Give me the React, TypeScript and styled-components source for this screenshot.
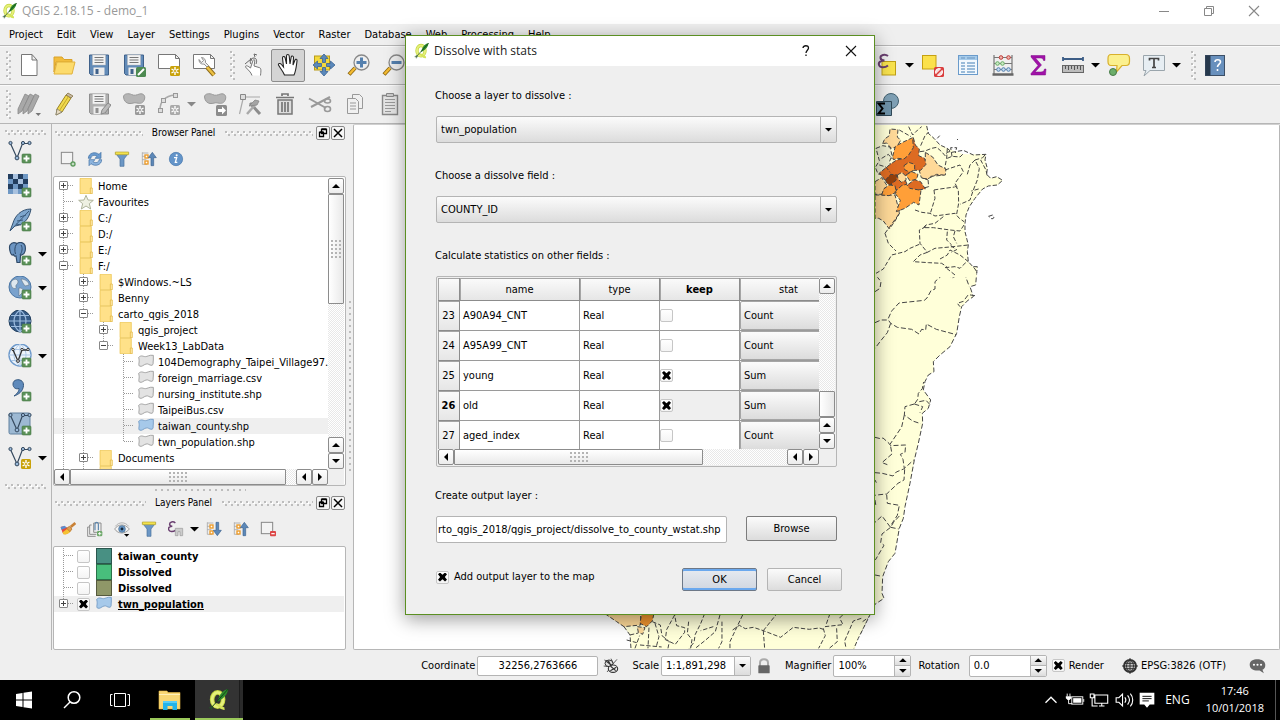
import React from "react";
import styled, { createGlobalStyle, css } from "styled-components";

const Global = createGlobalStyle`
  *, *::before, *::after { box-sizing: border-box; }
  body { margin: 0; background: #efefef; }
  body, button, input, select, table {
    font-family: "DejaVu Sans Condensed", "DejaVu Sans", sans-serif;
    font-size: 11px;
    line-height: 16px;
    color: #000;
  }
  button { padding: 0; border: 0; background: none; }
  svg { display: block; flex: none; }
`;

const system = `"Open Sans", "Noto Sans", sans-serif`;
const raised = `linear-gradient(#fbfbfb, #dcdcdc)`;

/* ---------- icons ---------- */

const Plus = () => (
  <>
    <rect x="14" y="14" width="9" height="9" rx="1" fill="#5b9158" stroke="#487a48" strokeWidth=".6" />
    <path d="M18.5 15.5v6M15.5 18.5h6" stroke="#fff" strokeWidth="1.8" />
  </>
);
const Gear = ({ tone = "#c9a20a" }: { tone?: string }) => (
  <>
    <rect x="13" y="13" width="10" height="10" rx="1.5" fill={tone} />
    <path d="M18 14v8M14.5 16l7 4M14.5 20l7-4" stroke="#fff" strokeWidth="1.4" />
    <circle cx="18" cy="18" r="1.1" fill={tone} />
  </>
);
const Disk = ({ tone = "#628bb8", line = "#3f618a" }: { tone?: string; line?: string }) => (
  <>
    <path d="M2.5 2h19v20H4l-1.500-1.500z" fill={tone} stroke={line} />
    <rect x="5.500" y="2" width="13" height="10" fill="#f3f3f3" stroke="#bbb" strokeWidth=".5" />
    <path d="M7.500 4.500h9M7.500 7h9M7.500 9.500h9" stroke="#777" />
    <rect x="6.500" y="14.500" width="11" height="7.500" fill="#ececec" />
    <rect x="8.500" y="16" width="3" height="5" fill={line} />
  </>
);
const Vee = () => (
  <>
    <path d="M2.500 3.500 9 18 14.500 3.500h7" fill="none" stroke="#35495e" strokeWidth="1.200" />
    <g fill="#9bbbdc" stroke="#35495e">
      <circle cx="2.500" cy="3" r="1.600" /><circle cx="9" cy="18" r="1.900" />
      <circle cx="15" cy="3" r="1.600" /><circle cx="21.500" cy="3" r="1.600" />
    </g>
  </>
);
const Mag = ({ minus }: { minus?: boolean }) => (
  <>
    <path d="m8 15-6 6.500" stroke="#8a6510" strokeWidth="4" />
    <path d="m8 15-5.500 6" stroke="#f4bb32" strokeWidth="2.400" />
    <circle cx="14.500" cy="9.500" r="7.500" fill="#efefef" stroke="#888" strokeWidth="1.300" />
    <path d={minus ? "M9.500 9.500h10" : "M9.500 9.500h10M14.500 4.500v10"} stroke="#5580ae" strokeWidth="3" />
  </>
);
const Blob = ({ tone = "#b5b5b5", line = "#999" }: { tone?: string; line?: string }) => (
  <path d="M1.500 5c0-3.500 5-4 8-2.500s5 .5 8-.5c4-1 6 2 5 5-1 4-4 5-7.500 4-3-1-5 1-8 .500S2 9 1.500 5z" fill={tone} stroke={line} />
);
const Needle = ({ flip }: { flip?: boolean }) => (
  <>
    <path d="M2 2v18M2 3h9M2 8h6M2 13h6M2 20h7" stroke="#999" fill="none" />
    <rect x="6" y="6" width="4.500" height="4.500" fill="#fff" stroke="#ee9a25" strokeWidth="2" />
    <rect x="6" y="15" width="4.500" height="4.500" fill="#fff" stroke="#ee9a25" strokeWidth="2" />
    <path d={flip ? "M15 2h4v12h4l-6 8-6-8h4z" : "M15 22h4V10h4l-6-8-6 8h4z"} fill="#5c88b8" stroke="#3e648f" />
  </>
);
const Quill = () => (
  <>
    <ellipse cx="10.500" cy="11.500" rx="6" ry="7.800" fill="none" stroke="#c3d63f" strokeWidth="5" />
    <ellipse cx="10.500" cy="11.500" rx="6" ry="7.800" fill="none" stroke="#e6f07c" strokeWidth="3" />
    <path d="M9 17c3-1 4 5 9 4.500" fill="none" stroke="#d5e45a" strokeWidth="3" />
    <path d="M22 0c-5 1-8 4-10 9l-2 5 3.500-2C18 9 21 6 22 0z" fill="#2c8a2b" />
    <path d="M22 0 4 20" stroke="#123f18" strokeWidth="1" />
    <path d="M1 20.500h5M3.500 18v5" stroke="#27542a" />
  </>
);

const art: Record<string, React.ReactNode> = {
  quill: <Quill />,
  page: <path d="M4.500 1.500h10.500l5 5.500v15.500h-15.500zM15 1.500v5.500h5" fill="#fff" stroke="#777" />,
  open: (
    <>
      <path d="M2 4h8l2 2.500h8V9H4L2 19z" fill="#f2bd3d" stroke="#d9a22b" />
      <path d="M5 9h18l-3 12H2z" fill="#fcdb6d" stroke="#e2b23b" />
    </>
  ),
  save: <Disk />,
  saveAs: (<><Disk /><rect x="14" y="14" width="10" height="10" rx="1.500" fill="#4d8a51" /><path d="m16 22 6-6" stroke="#fff" strokeWidth="2" /></>),
  composer: (<><path d="M1.500 1.500h17l4 4v10h-21zM18.500 1.500v4h4" fill="#fff" stroke="#777" /><Gear /></>),
  manager: (
    <>
      <path d="M1.500 1.500h17l4 4v10h-21zM18.500 1.500v4h4" fill="#fff" stroke="#777" />
      <path d="m15 14 7 8" stroke="#8c6a1a" strokeWidth="4.500" /><path d="m15 14 7 8" stroke="#ecc043" strokeWidth="2.500" />
      <path d="M7 6.500c0 4 3 5 5 4.500l3 3 1.500-1.500-3-3c.5-2-1-5-4-5l2 3-2 2z" fill="#eee" stroke="#777" strokeWidth=".8" />
    </>
  ),
  touch: (
    <>
      <path d="M10 22.500C9 19 6 17 3.500 14c0-2 2-1.500 5 1L11 7.500c.5-1.500 2-1 1.800.5l-.8 5 5 1.500c2.500.500 2 3 1.500 8" fill="#fff" stroke="#777" />
      <path d="M9 11c-2-3 0-6 3-6s3 4 2 6M13 4l-1-3 3 1M3 11l6-5M8 5.500 9.500 6 9 8" fill="none" stroke="#666" />
    </>
  ),
  pan: (
    <path d="M8.500 22C7 18 4 15 2.500 12c-.5-2 2-2 3-.500l2 2.500L6.500 5c0-2 2-2 2.500-.500l1.500 6.500V3c0-2 2.500-2 2.700 0l.8 8 1.200-7c.3-1.500 2.300-1.200 2.300.500L17 12l2-5c.5-1.500 2.500-.800 2 1-.500 4-1 10-3 14z" fill="#fff" stroke="#222" strokeWidth="1.100" />
  ),
  panSel: (
    <>
      <rect x="2.500" y="3" width="15" height="14" fill="#f3d93c" stroke="#b99b18" />
      <path d="m12 1 4 4.500h-2.500v4h-3v-4H8zM12 23l4-4.500h-2.500v-4h-3v4H8zM1 12l4.500-4v2.500h4v3h-4V16zM23 12l-4.500-4v2.500h-4v3h4V16z" fill="#5a88bb" stroke="#3b6392" strokeWidth=".8" />
    </>
  ),
  zoomIn: <Mag />,
  zoomOut: <Mag minus />,
  pencils: (
    <>
      <g stroke="#888" strokeWidth=".8" fill="#a8a8a8">
        <path d="m8 2 4 2-7 15-4 3V17z" /><path d="m13 2 4 2-7 15-4 3V17z" /><path d="m18 2 4 2-7 15-4 3V17z" />
      </g>
      <path d="M18.500 21H24l-2.700 3z" fill="#777" />
    </>
  ),
  pencil: (
    <>
      <path d="m14 3 5 3-9 14-6 3 1-6z" fill="#f1d94c" stroke="#9b8421" />
      <path d="m14 3 2-2 5 3-2 2z" fill="#c5b7a0" stroke="#847246" strokeWidth=".8" /><path d="m4 23 1-6 5 3z" fill="#e9dcc2" stroke="#777" strokeWidth=".7" /><path d="M16.500 4.500 7.500 18.500" stroke="#c3a92d" />
    </>
  ),
  saveGray: (<><Disk tone="#b0b0b0" line="#8f8f8f" /><path d="m14 22 1-4 6-7 3 2-6 8z" fill="#bbb" stroke="#888" /></>),
  blobAdd: (<><Blob /><Gear tone="#999" /></>),
  blobMove: (<><Blob /><rect x="13" y="13" width="11" height="11" rx="1.500" fill="#8c8c8c" /><path d="M15 17h4v-2.500l4 4-4 4V20h-4z" fill="#fff" /></>),
  curve: (<><path d="M3 18C3 9 8 4 18 3" fill="none" stroke="#aaa" strokeWidth="1.500" /><g fill="#ddd" stroke="#999"><rect x="1.500" y="16.500" width="4" height="4" /><rect x="4.500" y="6.500" width="4" height="4" /><rect x="16.500" y="1.500" width="4" height="4" /></g><Gear tone="#aaa" /></>),
  node: (<><path d="M5 5h17M5 7 1.500 22" fill="none" stroke="#aaa" strokeWidth="1.200" /><path d="M2.500 2.500h5v5h-5z" fill="#ddd" stroke="#888" /><path d="m12 11 10 11" stroke="#8d8d8d" strokeWidth="3" /><path d="M17 13 9 22" stroke="#aaa" strokeWidth="2.500" /><path d="m11 14 6-6 4 1-2 4z" fill="#a5a5a5" stroke="#888" strokeWidth=".8" /></>),
  trash: (<><path d="M5 8h14v14H5z" fill="#ddd" stroke="#777" strokeWidth="1.500" /><path d="M3 5.500h18M9 4V2h6v2M9 10v10M12 10v10M15 10v10" stroke="#777" strokeWidth="1.700" fill="none" /></>),
  cut: (<><path d="M1 6.500 18 16M3 15 22 5" stroke="#999" strokeWidth="2" /><ellipse cx="19.500" cy="9" rx="3" ry="2" fill="none" stroke="#999" strokeWidth="1.600" /><ellipse cx="19.500" cy="17" rx="3" ry="2.500" fill="none" stroke="#999" strokeWidth="1.600" /></>),
  copy: (<g fill="#f0f0f0" stroke="#999"><path d="M9.500 2.500h7l3 3v11h-10z" /><path d="M4.500 6.500h8l3 3v12h-11z" /><path d="M7 11h6M7 14h6M7 17h6" /></g>),
  paste: (<><path d="M4.500 3.500h15v19h-15z" fill="#e4e4e4" stroke="#888" strokeWidth="1.400" /><path d="M8.500 1.500h7v3h-7z" fill="#ccc" stroke="#888" /><path d="M7 7.500h10M7 10.500h10M7 13.500h10M7 16.500h10M7 19.500h6" stroke="#999" /></>),
  exprSel: (<><rect x="7" y="8.500" width="13.500" height="13.500" fill="#f9e34e" stroke="#bf9f16" /><path d="M13 3C10 .500 5 2 5.500 5c.3 2 2 2.500 4 2.500C6 7.500 3 9 4 12c1 3 6 3 9 .500" fill="none" stroke="#6a3f70" strokeWidth="2" /></>),
  deselect: (<><rect x="1.500" y="2.500" width="13.500" height="13.500" fill="#fbe14c" stroke="#c5a012" /><rect x="13" y="14" width="10" height="10" rx="1.500" fill="#d93c3c" /><circle cx="18" cy="19" r="3.500" fill="#f7dada" stroke="#fff" /><path d="m15 22 6-6" stroke="#d93c3c" strokeWidth="1.500" /></>),
  attrs: (<><rect x="2.500" y="2.500" width="19" height="19" fill="#f2f8fd" stroke="#6a9bcb" /><rect x="3" y="3" width="18" height="4" fill="#a5cbea" /><path d="M5 5h4M11 5h8M5 10h4M5 13h4M5 16h4M5 19h4M11 10h8M11 13h8M11 16h8M11 19h8" stroke="#7ea6cd" strokeWidth="1.300" /></>),
  abacus: (<><path d="M3 2v20M21 2v20M3 4.500h18M3 10.500h18M3 16.500h18" stroke="#777" strokeWidth="1.200" fill="none" /><path d="M1.500 21.500h21" stroke="#666" strokeWidth="2.500" /><g fill="#f0b5b0" stroke="#c03b36"><circle cx="10" cy="4.500" r="1.800" /><circle cx="17.500" cy="4.500" r="1.800" /></g><g fill="#cdebc6" stroke="#65ad63"><circle cx="6.500" cy="10.500" r="1.800" /><circle cx="11.500" cy="10.500" r="1.800" /></g><g fill="#c5dcf2" stroke="#4f7eaf"><circle cx="7.500" cy="16.500" r="1.800" /><circle cx="12.500" cy="16.500" r="1.800" /><circle cx="17.500" cy="16.500" r="1.800" /></g></>),
  sigma: <path d="M5 2.500h14v5h-1.500C17 5.500 16 5 14 5H9.500l6 7-6.500 7h6c2 0 3-.800 3.500-3H20l-.500 6H5v-1.500l7-8-7-8.500z" fill="#a012a8" stroke="#7d0c86" strokeWidth=".5" />,
  ruler: (<><path d="M2 6h20M2 4v4M22 4v4" stroke="#3c5d86" strokeWidth="1.800" /><rect x="1.500" y="12.500" width="21" height="7" fill="#bcbcbc" stroke="#666" /><path d="M4.500 13v3M7.500 13v4M10.500 13v3M13.500 13v4M16.500 13v3M19.500 13v4" stroke="#555" /></>),
  tip: (<><path d="M4 1.500h15q3.500 0 3.500 4v3q0 4-3.500 4h-4L9.500 19l.500-6.500H4q-3 0-3-4v-3q0-4 3-4z" fill="#fbf08e" stroke="#d8b02c" strokeWidth="1.200" /><circle cx="6" cy="19" r="3.500" fill="#6cae6a" stroke="#477b49" /></>),
  text: (<><path d="M1.500 2.500h21v15H8L2 23l2-5.500H1.500z" fill="#e7eef3" stroke="#9aa5ac" /><path d="M7.500 7.500V5.500h9v2M12 5.500v9M10 14.500h4" fill="none" stroke="#444" strokeWidth="1.700" /></>),
  book: (<><rect x="2.500" y="2.500" width="19" height="20" fill="#6890bd" stroke="#3c4f66" /><rect x="2.500" y="2.500" width="5" height="20" fill="#26384c" /><path d="M12 9c0-3 5.500-3 5.500 0 0 2-3 2.500-3 5M14.500 16v2" fill="none" stroke="#fff" strokeWidth="1.600" /></>),
  dissolve: (<><circle cx="16" cy="9" r="7.500" fill="#7fa0b5" stroke="#41606f" /><path d="M1.500 9.500h15v14h-15z" fill="#6f93a9" stroke="#2f4857" /><path d="M10 11.500H3.500l4 5-4 5H10" fill="none" stroke="#000" strokeWidth="2" /></>),
  vector: (<><Vee /><Plus /></>),
  raster: (
    <>
      <rect x="0" y="0" width="20" height="20" fill="#6f98c4" />
      <path d="M0 0h5v5H0zM10 0h5v5h-5zM5 5h5v5H5zM15 5h5v5h-5zM0 10h5v5H0zM10 10h5v5h-5z" fill="#223d5e" />
      <path d="M5 0h5v5H5zM10 5h5v5h-5zM5 15h5v5H5z" fill="#a9c2df" />
      <Plus />
    </>
  ),
  feather: (<><path d="M23 1C13 1 7 8 5 15l-3 8 5-5c8-1 14-6 16-17z" fill="#7ea6cd" stroke="#33506f" /><path d="M21 3 2 23M9 13l6-1M12 9l6-2M8 16l5 1" stroke="#3a5a7c" fill="none" /><Plus /></>),
  elephant: (<><path d="M2 3c2-3 5-2.500 7-1.500 3-2 7-1 8 2 1 4 0 8-2.500 9l-2 1-.5 7h-3l-1-6.500c-1.500.5-2.500-.5-2.500-2-1 2.500-3 0-3.500-3C1.500 7 1 5 2 3z" fill="#6c95c2" stroke="#2f4a69" strokeWidth="1.200" /><path d="M8.500 2c-2 3-2 7-1 10M13 3c2 3 1 7-1 10" fill="none" stroke="#2f4a69" /><Plus /></>),
  globe: (<><circle cx="12" cy="11" r="11" fill="#7aa2cd" stroke="#4b76a4" /><path d="M5 4c3-2 5 0 5 2s-3 3-2 5-3 2-4 0-2-5 1-7zM13 3c4 0 8 3 8 6l-4 1-2-3zM11 12c4 0 5 2 3 5l-3 3z" fill="#dfe8ef" stroke="#567" strokeWidth=".5" /><Plus /></>),
  globeDark: (<><circle cx="12" cy="11" r="11" fill="#355a86" stroke="#23405f" /><path d="M1 11h22M3 5.500h18M3 16.500h18M12 0v22M12 0C4 6 4 16 12 22M12 0c8 6 8 16 0 22" fill="none" stroke="#9ebde0" strokeWidth="1.200" /><Plus /></>),
  globeVec: (<><circle cx="12" cy="11" r="11" fill="#edf4fb" stroke="#6f9acb" strokeWidth="1.400" /><path d="M1 11h22M3 5.500h18M3 16.500h18M12 0v22M12 0C4 6 4 16 12 22M12 0c8 6 8 16 0 22" fill="none" stroke="#a9c6e6" /><path d="M5 6 10 17 14 6h6" fill="none" stroke="#333" strokeWidth="1.300" /><g fill="#eee" stroke="#333"><circle cx="5" cy="5.500" r="1.200" /><circle cx="10" cy="17" r="1.400" /><circle cx="14" cy="5.500" r="1.200" /><circle cx="20" cy="5.500" r="1.200" /></g><Plus /></>),
  comma: (<><path d="M5 6c0-6 11-6 10.500 1.500-.5 6-5 9-9.500 10.500 4-3 5-5 5-7.500-3 1-6-.5-6-4.500z" fill="#5f8abb" stroke="#35587f" /><Plus /></>),
  virtual: (<><rect x="1" y="1" width="21" height="21" rx="1.500" fill="#9db9d3" stroke="#60809e" /><Vee /><Plus /></>),
  vecNew: (<><Vee /><Gear /></>),
  addLayer: (<><rect x="2" y="2" width="17" height="17" fill="#f3f3f3" stroke="#888" strokeWidth="1.500" /><circle cx="19.500" cy="19.500" r="4" fill="#5b9a5a" /><path d="M19.500 17.500v4M17.500 19.500h4" stroke="#fff" strokeWidth="1.200" /></>),
  refresh: (<><path d="M2 11C2 3 12 0 18 5l3-3v9h-9l3-3C11 5 6 7 6 11z" fill="#6a9bd0" stroke="#3c6ca0" /><path d="M22 13c0 8-10 11-16 6l-3 3v-9h9l-3 3c4 3 9 1 9-3z" fill="#8db4de" stroke="#3c6ca0" /></>),
  filter: (<><path d="M2 3h20l-7 9v11h-6V12z" fill="#6c97c5" stroke="#47709c" /><path d="M2 1.500h20v4H2z" fill="#f3e24c" stroke="#b5a32d" /></>),
  collapse: <Needle />,
  expand: <Needle flip />,
  info: (<><circle cx="12" cy="12" r="10" fill="#6394c9" stroke="#4374aa" /><path d="M9 10h4l-2 7h3" fill="none" stroke="#fff" strokeWidth="2" /><circle cx="13" cy="6.500" r="1.600" fill="#fff" /></>),
  brush: (<><path d="M1 9c4-1 8-1 11 2l2 6c-3 3-7 4-10 1z" fill="#e74a3b" /><path d="m4 17 8-6 4 4c-2 4-7 6-11 5z" fill="#f5c233" /><path d="m1 9 6-2 3 3-8 3z" fill="#5a8dd0" /><path d="m10 11 5 5 3-4-4-4z" fill="#e0a050" stroke="#b06a1e" /><path d="m16 9 7-6" stroke="#c98136" strokeWidth="4" /></>),
  group: (<><path d="M7 6H4v14h10M4 9H1v14h12M10 3h11v14H10z" fill="none" stroke="#888" strokeWidth="1.400" /><path d="M12 14V5c0-4 5-4 5 0v9" fill="none" stroke="#4b7ba8" strokeWidth="1.600" /><rect x="15" y="15" width="8" height="8" rx="2" fill="#6ea86a" /><path d="M19 16.500v5M16.500 19h5" stroke="#fff" strokeWidth="1.300" /></>),
  eye: (<><path d="M1 12c5-8 16-8 22 0-6 8-17 8-22 0z" fill="#f4f4f4" stroke="#888" strokeWidth="1.200" /><circle cx="12" cy="12" r="5" fill="#6b9ac9" stroke="#3d668f" /><circle cx="12" cy="12" r="2.200" fill="#16293d" /><path d="M2 8C7 1 17 1 22 8" fill="none" stroke="#aaa" strokeWidth="1.300" /><path d="M15 19.500h8l-4 4z" fill="#000" /></>),
  exprFilter: (<><path d="M11 3C8 0 2 1 2.500 5c.3 2 2 3 4 3C3 8 0 9.500 1 13c1 3.500 7 3.500 10 1" fill="none" stroke="#6a3f70" strokeWidth="2.200" /><path d="M11 11h11v11h-4v-6h-3v6h-4z" fill="#ccc" stroke="#999" /></>),
  removeLayer: (<><rect x="2" y="2" width="17" height="17" fill="#f3f3f3" stroke="#888" strokeWidth="1.500" /><rect x="15" y="15" width="9" height="8" rx="1.500" fill="#dc4747" /><path d="M17 19h5" stroke="#fff" strokeWidth="1.800" /></>),
  folder: (<><path d="M3 .500h17v23H3z" fill="#ffe189" stroke="#e9bf45" /><path d="M18.500 15v8.500h3V15z" fill="#ffe9a8" stroke="#e0b23a" /></>),
  star: <path d="m12 2 3 7 8 .500-6 5 2 8-7-4.500L5 22.500l2-8-6-5L9 9z" fill="#eef0e2" stroke="#aeb39b" strokeWidth="1.500" />,
  poly: <path d="M1 5c4-4 7-1 10-1s6-3 12-2v7c-1 5 1 6-2 8-5 0-5-3-9-2s-6 5-10 3c-2-3 1-5-1-13z" fill="#e3e3e3" stroke="#999" strokeWidth="1.300" />,
  polyBlue: <path d="M1 5c4-4 7-1 10-1s6-3 12-2v7c-1 5 1 6-2 8-5 0-5-3-9-2s-6 5-10 3c-2-3 1-5-1-13z" fill="#a6c9ea" stroke="#7099c4" strokeWidth="1.300" />,
  bug: (<><path d="M2 3l8 3 11 10M12 1l3 6M21 2l-7 8M1 12l8 1M6 21l5-6" stroke="#555" strokeWidth="1.400" fill="none" /><ellipse cx="9" cy="8" rx="6" ry="5" fill="#ddd" stroke="#333" strokeWidth="1.500" /><ellipse cx="15" cy="16" rx="7" ry="5.500" fill="#eee" stroke="#333" strokeWidth="1.700" /><path d="m5 5 8 6M11 12l8 7M11 19l9-5M8 4l4 8" stroke="#333" strokeWidth="1.800" /></>),
  lock: (<><path d="M6 12V7c0-7 12-7 12 0v5" fill="none" stroke="#aaa" strokeWidth="3" /><rect x="3.500" y="11" width="17" height="12" rx="1" fill="#666" /></>),
  crs: (<><circle cx="12" cy="12" r="9" fill="#ccc" stroke="#333" strokeWidth="3" /><path d="M0 12h24M12 0v24M12 3C5 8 5 16 12 21M12 3c7 5 7 13 0 18M4 8h16M4 16h16" fill="none" stroke="#333" strokeWidth="1.500" /></>),
  chat: (<><path d="M12 3c6 0 11 3 11 8s-2 6-4 7l2 5-6-4c-8 1-14-2-14-8s5-8 11-8z" fill="#666" /><circle cx="7" cy="11" r="1.500" fill="#fff" /><circle cx="12" cy="11" r="1.500" fill="#fff" /><circle cx="17" cy="11" r="1.500" fill="#fff" /></>),
  win: <path d="m4 6 6.500-1v6.500H4zM11.500 4.800 20 3.500v8h-8.500zM4 12.500h6.500V19L4 18zM11.500 12.500H20v8l-8.500-1.300z" fill="#fff" />,
  search: (<><circle cx="14" cy="9.500" r="5.800" fill="none" stroke="#fff" strokeWidth="1.500" /><path d="m10 14-6 6" stroke="#fff" strokeWidth="1.500" /></>),
  tasks: <path d="M6.500 5.500h11v13h-11zM4.500 6.500h-2v11h2M19.500 6.500h2v11h-2" fill="none" stroke="#fff" />,
  explorer: (<><path d="M1 3h8l1 1.500h12V21H1z" fill="#f8d775" stroke="#e8b844" strokeWidth=".6" /><path d="M1 6.500h21" stroke="#fff0b8" /><path d="M5 13h14v9h-4.500v-4h-5v4H5z" fill="#22b3ea" /><path d="M5 13h14v2H5z" fill="#58cdf7" /></>),
  up: <path d="m6 15 6-6 6 6" fill="none" stroke="#fff" strokeWidth="1.400" />,
  battery: (<><rect x="8.500" y="8.500" width="12" height="8" fill="none" stroke="#fff" /><rect x="10" y="10" width="9" height="5" fill="#fff" /><path d="M21.500 11v3M3.500 5v3M6.500 5v3M5 12v4h4" stroke="#fff" fill="none" /><path d="M2 8h6v2L6 12H4l-2-2z" fill="#fff" /></>),
  network: <path d="M7.500 6.500h14v9H7.500zM12 18.500h6M15 15.500v3M2.500 5.500h4v4h-4zM4.500 9.500v9h6" fill="none" stroke="#fff" strokeWidth="1.200" />,
  sound: <path d="M4.500 9.500h3l4-4v13l-4-4h-3zM14 9c1.500 2 1.500 4 0 6M17 7c2.500 3 2.500 7 0 10M20 5c3.500 4 3.500 10 0 14" fill="none" stroke="#fff" strokeWidth="1.200" />,
  action: (<><path d="M4 4h16v13h-5l-3 3.500L9 17H4z" fill="#fff" /><path d="M7 8h10M7 10.500h10M7 13h7" stroke="#000" /></>),
  min: <path d="M7 12.500h10" stroke="#888" />,
  restore: <path d="M7.500 9.500h7v7h-7zM9.500 9.500v-2h7v7h-2" fill="none" stroke="#888" />,
  close: <path d="m7 7 10 10M17 7 7 17" stroke="currentColor" strokeWidth="1.100" />,
};

const Icon = ({ name, size = 24 }: { name: string; size?: number }) => (
  <svg width={size} height={size} viewBox="0 0 24 24" aria-hidden="true">{art[name]}</svg>
);

/* ---------- shared parts ---------- */

const Tri = styled.span<{ $dir?: "up" | "down" | "left" | "right"; $size?: number; $tone?: string }>`
  flex: none;
  width: ${p => (p.$dir === "left" || p.$dir === "right" ? p.$size ?? 4 : (p.$size ?? 4) * 2)}px;
  height: ${p => (p.$dir === "left" || p.$dir === "right" ? (p.$size ?? 4) * 2 : p.$size ?? 4)}px;
  background: ${p => p.$tone ?? "#000"};
  clip-path: ${p =>
    p.$dir === "up" ? "polygon(50% 0, 100% 100%, 0 100%)"
      : p.$dir === "left" ? "polygon(0 50%, 100% 0, 100% 100%)"
      : p.$dir === "right" ? "polygon(0 0, 100% 50%, 0 100%)"
      : "polygon(0 0, 100% 0, 50% 100%)"};
`;

const dots = css`
  background-image: radial-gradient(circle at 2px 2px, #bdbdbd 1px, transparent 1px),
    radial-gradient(circle at 5px 5px, #bdbdbd 1px, transparent 1px),
    radial-gradient(circle at 3px 3px, #fff 1px, transparent 1px);
  background-size: 6px 6px;
`;
const Grip = styled.span<{ $vertical?: boolean; $wide?: boolean }>`
  ${dots}
  flex: ${p => (p.$wide ? 1 : "none")};
  width: ${p => (p.$vertical ? "6px" : "auto")};
  height: ${p => (p.$vertical ? "30px" : "6px")};
`;
const SplitGrip = styled.span<{ $vertical?: boolean }>`
  width: ${p => (p.$vertical ? 4 : 92)}px;
  height: ${p => (p.$vertical ? 174 : 4)}px;
  background-image: radial-gradient(circle at 2px 2px, #bdbdbd 1px, transparent 1px);
  background-size: ${p => (p.$vertical ? "4px 6px" : "6px 4px")};
`;

const CheckBox = styled.input.attrs({ type: "checkbox" })`
  appearance: none;
  flex: none;
  display: grid;
  place-items: center;
  width: 13px;
  height: 13px;
  margin: 0;
  border: 1px solid #c6c6c6;
  border-radius: 2px;
  background: linear-gradient(#fff, #f4f4f4);
  &:checked::after {
    content: "";
    width: 9px;
    height: 9px;
    background: #000;
    clip-path: polygon(22% 0, 50% 25%, 78% 0, 100% 20%, 76% 50%, 100% 80%, 78% 100%, 50% 75%, 22% 100%, 0 80%, 24% 50%, 0 20%);
  }
`;

const TextBox = styled.input<{ $width?: number; $center?: boolean }>`
  ${p => (p.$width ? `width: ${p.$width}px;` : "flex: 1; min-width: 0;")}
  height: 20px;
  padding: 0 4px;
  border: 1px solid #b4b4b4;
  border-radius: 2px;
  background: #fff;
  text-align: ${p => (p.$center ? "center" : "left")};
`;

/* ---------- scroll bars ---------- */

const Bar = styled.div<{ $vertical?: boolean }>`
  display: flex;
  flex: none;
  flex-direction: ${p => (p.$vertical ? "column" : "row")};
  ${p => (p.$vertical ? "width: 16px;" : "height: 16px;")}
  background: repeating-conic-gradient(#e8e8e8 0 25%, #fff 0 50%) 0 0 / 2px 2px;
`;
const Step = styled.button`
  flex: none;
  display: grid;
  place-items: center;
  width: 16px;
  height: 16px;
  border: 1px solid #8c8c8c;
  border-radius: 2px;
  background: linear-gradient(#fff, #ececec);
`;
const Thumb = styled.div<{ $length: number; $vertical?: boolean }>`
  display: grid;
  place-items: center;
  flex: 0 1 ${p => p.$length}px;
  border: 1px solid #8c8c8c;
  border-radius: 1px;
  background: linear-gradient(${p => (p.$vertical ? "90deg" : "180deg")}, #fff, #e9e9e9);
`;
const ThumbGrip = styled.span<{ $vertical?: boolean }>`
  width: ${p => (p.$vertical ? 12 : 20)}px;
  height: ${p => (p.$vertical ? 20 : 12)}px;
  background: radial-gradient(circle at 2px 2px, #b4b4b4 1px, transparent 1px) 0 0 / 4px 4px;
`;
const Fill = styled.span`flex: 1;`;

const ScrollBar = ({ vertical, length, offset = 0, grip = true }: { vertical?: boolean; length: number; offset?: number; grip?: boolean }) => (
  <Bar $vertical={vertical}>
    <Step aria-label="Scroll back"><Tri $dir={vertical ? "up" : "left"} /></Step>
    {offset > 0 && <Fill />}
    <Thumb $length={length} $vertical={vertical}>{grip && <ThumbGrip $vertical={vertical} />}</Thumb>
    {offset === 0 && <Fill />}
    <Step aria-label="Step back"><Tri $dir={vertical ? "up" : "left"} /></Step>
    <Step aria-label="Scroll forward"><Tri $dir={vertical ? "down" : "right"} /></Step>
  </Bar>
);

/* ---------- main window ---------- */

const Screen = styled.div`
  position: relative;
  display: flex;
  flex-direction: column;
  min-height: 100vh;
  overflow: hidden;
`;
const TitleBar = styled.header`
  display: flex;
  align-items: center;
  height: 24px;
  padding: 0 4px 2px 2px;
  background: #fff;
  color: #999;
  font-family: ${system};
  font-size: 12px;
`;
const TitleText = styled.span`flex: 1; padding-left: 4px;`;
const WindowButton = styled.button<{ $strong?: boolean }>`
  display: grid;
  place-items: center;
  width: 45px;
  height: 24px;
  color: ${p => (p.$strong ? "#111" : "#888")};
`;
const MenuBar = styled.nav`
  display: flex;
  align-items: center;
  height: 21px;
  padding: 1px 0 0 2px;
`;
const MenuItem = styled.button`
  padding: 0 7px;
  line-height: 20px;
`;
const ToolRow = styled.div`
  display: flex;
  align-items: center;
  height: 39px;
  border-top: 1px solid #b6b6b6;
  box-shadow: inset 0 1px #fafafa;
`;
const ToolGroup = styled.div<{ $start?: number }>`
  display: flex;
  align-items: center;
  margin-left: ${p => p.$start ?? 0}px;
`;
const ToolHandle = styled.span<{ $first?: boolean }>`
  display: flex;
  justify-content: flex-end;
  width: ${p => (p.$first ? 11 : 15)}px;
  padding-right: ${p => (p.$first ? 0 : 1)}px;
`;
const ToolButton = styled.button<{ $active?: boolean }>`
  display: grid;
  place-items: center;
  width: ${p => (p.$active ? 34 : 35)}px;
  height: 33px;
  ${p => p.$active && "margin-right: 1px; border: 1px solid #8d8d8d; border-radius: 2px; background: #d4d4d4;"}
`;
const DropButton = styled.button`
  display: grid;
  place-items: center;
  width: 11px;
  height: 33px;
`;

type Tool = { icon: string; label: string; drop?: boolean; active?: boolean; tone?: string };
const ToolSet = ({ tools }: { tools: Tool[] }) => (
  <>
    {tools.map(t => (
      <React.Fragment key={t.label}>
        <ToolButton aria-label={t.label} $active={t.active}><Icon name={t.icon} /></ToolButton>
        {t.drop && <DropButton aria-label={`${t.label} options`}><Tri $size={5} $tone={t.tone} /></DropButton>}
      </React.Fragment>
    ))}
  </>
);
const tool = (icon: string, label: string, extra: Partial<Tool> = {}): Tool => ({ icon, label, ...extra });

const fileTools = [tool("page", "New"), tool("open", "Open"), tool("save", "Save"), tool("saveAs", "Save as"), tool("composer", "New composer"), tool("manager", "Composer manager")];
const navTools = [tool("touch", "Touch"), tool("pan", "Pan", { active: true }), tool("panSel", "Pan to selection"), tool("zoomIn", "Zoom in"), tool("zoomOut", "Zoom out")];
const attrTools = [tool("exprSel", "Select by expression", { drop: true }), tool("deselect", "Deselect"), tool("attrs", "Attribute table"), tool("abacus", "Field calculator"), tool("sigma", "Statistics"), tool("ruler", "Measure", { drop: true }), tool("tip", "Map tips"), tool("text", "Annotation", { drop: true })];
const editTools = [tool("pencils", "Current edits"), tool("pencil", "Toggle editing"), tool("saveGray", "Save edits"), tool("blobAdd", "Add feature"), tool("curve", "Add curve", { drop: true, tone: "#888" }), tool("blobMove", "Move feature"), tool("node", "Node tool"), tool("trash", "Delete"), tool("cut", "Cut"), tool("copy", "Copy"), tool("paste", "Paste")];
const sourceTools = [tool("vector", "Add vector"), tool("raster", "Add raster"), tool("feather", "Add SpatiaLite"), tool("elephant", "Add PostGIS", { drop: true }), tool("globe", "Add WMS", { drop: true }), tool("globeDark", "Add WCS"), tool("globeVec", "Add WFS", { drop: true }), tool("comma", "Add delimited text"), tool("virtual", "Add virtual layer"), tool("vecNew", "New shapefile", { drop: true })];

const Body = styled.main`
  display: flex;
  flex: 1;
  min-height: 0;
  border-top: 1px solid #b6b6b6;
`;
const ToolBox = styled.aside`
  display: flex;
  flex-direction: column;
  flex: none;
  width: 52px;
  padding: 5px 0 0 2px;
  border-right: 1px solid #b6b6b6;
`;
const SourceRow = styled.div`
  display: flex;
  align-items: center;
  height: 34px;
`;
const SourceGrip = styled.div`display: flex; height: 6px; padding: 0 4px 0 2px; &:last-child { margin-top: 8px; }`;
const Dock = styled.section`
  display: flex;
  flex-direction: column;
  flex: none;
  width: 294px;
  padding-left: 1px;
`;
const DockTitle = styled.h2`
  display: flex;
  align-items: center;
  gap: 9px;
  height: 18px;
  margin: 0;
  padding: 0 1px;
  font-size: 10px;
  font-weight: 400;
  line-height: 18px;
`;
const DockButtons = styled.span`display: flex; gap: 1px; margin-left: -6px;`;
const DockButton = styled.button`
  display: grid;
  place-items: center;
  width: 14px;
  height: 14px;
  border: 1px solid #888;
  border-radius: 2px;
  background: #f6f6f6;
`;
const DockTools = styled.div`
  display: flex;
  align-items: center;
  height: 34px;
  padding-left: 1px;
`;
const DockTool = styled.button`
  display: grid;
  place-items: center;
  width: 27px;
  height: 27px;
`;
const Frame = styled.div<{ $height?: number }>`
  display: flex;
  flex-direction: column;
  ${p => (p.$height ? `flex: none; height: ${p.$height}px;` : "flex: 1; min-height: 0;")}
  padding: 1px 1px 0 0;
  border: 1px solid #b6b6b6;
  border-radius: 2px;
  background: #fff;
  overflow: hidden;
`;
const Splitter = styled.div<{ $vertical?: boolean }>`
  display: flex;
  flex: none;
  align-items: center;
  justify-content: center;
  ${p => (p.$vertical ? "width: 7px;" : "height: 8px;")}
`;

const DockHead = ({ title }: { title: string }) => (
  <DockTitle>
    <Grip $wide />
    {title}
    <Grip $wide />
    <DockButtons>
      <DockButton aria-label="Float panel">
        <svg width="10" height="10" viewBox="0 0 10 10"><path d="M3.500 1.500h5v4h-5zM3.500 1h5M1.500 4.500h4v4h-4zM1.500 4h4" fill="#fff" stroke="#000" strokeWidth="1.300" /></svg>
      </DockButton>
      <DockButton aria-label="Close panel">
        <svg width="10" height="10" viewBox="0 0 10 10"><path d="m1 1 8 8M9 1 1 9" stroke="#000" strokeWidth="1.500" /></svg>
      </DockButton>
    </DockButtons>
  </DockTitle>
);

/* ---------- trees ---------- */

const TreeBody = styled.div`display: flex; flex: 1; min-height: 0;`;
const TreeRows = styled.div`flex: 1; height: 291px; min-width: 0; overflow: hidden;`;
const TreeRow = styled.div<{ $selected?: boolean; $bold?: boolean }>`
  display: flex;
  align-items: center;
  height: 16px;
  line-height: 18px;
  white-space: nowrap;
  background: ${p => (p.$selected ? "#efefef" : "none")};
  font-weight: ${p => (p.$bold ? 700 : 400)};
`;
const TreeText = styled.span<{ $active?: boolean }>`
  padding-top: 2px;
  text-decoration: ${p => (p.$active ? "underline" : "none")};
`;
const vLine = "repeating-linear-gradient(#999 0 1px, transparent 1px 2px)";
const hLine = "repeating-linear-gradient(90deg, #999 0 1px, transparent 1px 2px)";
const Guide = styled.span<{ $v?: "full" | "top" | "bottom" | "none"; $h?: boolean }>`
  display: grid;
  place-items: center;
  flex: none;
  width: 20px;
  height: 16px;
  background-repeat: no-repeat;
  background-image: ${vLine}, ${hLine};
  background-size: ${p => (p.$v === "none" ? "0 0" : p.$v === "full" ? "1px 16px" : "1px 8px")}, ${p => (p.$h ? "10px 1px" : "0 0")};
  background-position: 9px ${p => (p.$v === "bottom" ? 8 : 0)}px, 10px 7px;
`;
const Toggle = styled.button`
  display: grid;
  place-items: center;
  width: 9px;
  height: 9px;
  margin: 0 1px 2px 0;
  border: 1px solid #888;
  border-radius: 1px;
  background: #fff;
`;
const Expander = ({ open }: { open?: boolean }) => (
  <Toggle aria-label={open ? "Collapse" : "Expand"}>
    <svg width="5" height="5" viewBox="0 0 5 5"><path d={open ? "M0 2.500h5" : "M0 2.500h5M2.500 0v5"} stroke="#444" /></svg>
  </Toggle>
);
const TreeIcon = styled.span`
  display: grid;
  place-items: center;
  flex: none;
  width: 24px;
`;

type Node = { text: string; level: number; icon: string; box?: "+" | "-"; v?: "full" | "top" | "bottom"; selected?: boolean };
const nodes: Node[] = [
  { text: "Home", level: 0, icon: "folder", box: "+", v: "bottom" },
  { text: "Favourites", level: 0, icon: "star" },
  { text: "C:/", level: 0, icon: "folder", box: "+" },
  { text: "D:/", level: 0, icon: "folder", box: "+" },
  { text: "E:/", level: 0, icon: "folder", box: "+" },
  { text: "F:/", level: 0, icon: "folder", box: "-" },
  { text: "$Windows.~LS", level: 1, icon: "folder", box: "+" },
  { text: "Benny", level: 1, icon: "folder", box: "+" },
  { text: "carto_qgis_2018", level: 1, icon: "folder", box: "-" },
  { text: "qgis_project", level: 2, icon: "folder", box: "+" },
  { text: "Week13_LabData", level: 2, icon: "folder", box: "-", v: "top" },
  { text: "104Demography_Taipei_Village97.shp", level: 3, icon: "poly" },
  { text: "foreign_marriage.csv", level: 3, icon: "poly" },
  { text: "nursing_institute.shp", level: 3, icon: "poly" },
  { text: "TaipeiBus.csv", level: 3, icon: "poly" },
  { text: "taiwan_county.shp", level: 3, icon: "polyBlue", selected: true },
  { text: "twn_population.shp", level: 3, icon: "poly", v: "top" },
  { text: "Documents", level: 1, icon: "folder", box: "+" },
  { text: "Downloads", level: 1, icon: "folder", box: "+" },
];

const HScroll = styled.div`flex: none; padding-right: 16px; background: #efefef;`;
const BrowserTree = () => (
  <Frame>
    <TreeBody>
      <TreeRows>
        {nodes.map(n => (
          <TreeRow key={n.text} $selected={n.selected}>
            {Array.from({ length: n.level }, (_, i) => <Guide key={i} $v={i < 2 ? "full" : "none"} />)}
            <Guide $v={n.v ?? "full"} $h>{n.box && <Expander open={n.box === "-"} />}</Guide>
            <TreeIcon><Icon name={n.icon} size={16} /></TreeIcon>
            <TreeText>{n.text}</TreeText>
          </TreeRow>
        ))}
      </TreeRows>
      <ScrollBar vertical length={110} />
    </TreeBody>
    <HScroll><ScrollBar length={216} /></HScroll>
  </Frame>
);

const LayerCheck = styled.span`display: grid; place-items: center; flex: none; width: 19px;`;
const Swatch = styled.span<{ $tone?: string }>`
  display: grid;
  place-items: center;
  flex: none;
  width: 16px;
  height: 16px;
  margin: 0 6px 0 3px;
  ${p => p.$tone && `background: ${p.$tone}; border: 1px solid rgba(0, 0, 0, 0.4);`}
`;
const layers = [
  { name: "taiwan_county", tone: "#489083" },
  { name: "Dissolved", tone: "#48be7c" },
  { name: "Dissolved", tone: "#8f9768" },
  { name: "twn_population", on: true },
];

/* ---------- map ---------- */

const MapFrame = styled.section`
  display: flex;
  flex: 1;
  min-width: 0;
  border: 1px solid #b6b6b6;
  border-top-color: #d0d0d0;
  border-radius: 2px;
  background: #fff;
  overflow: hidden;
`;
const MapSvg = styled.svg`width: 100%; height: 100%;`;

const TaiwanMap = () => (
  <MapSvg>
    <g transform="translate(-354 -125)" strokeLinejoin="round">
      <g transform="translate(860 270) scale(.3333)" fill="none" stroke="#444" strokeWidth="3" strokeDasharray="15 7">
        <path fill="#ffffd9" d="M-100-10H352l-2 20-3 35-17 5 10 30-15 10-20 20-7 30-8 50-20 40-30 25-20 20 2 30-17 10-10 20-5 25 22 30-7 25-18 15 1 30-13 60-12 50-13 70-15 70-5 35-12 30-13 75-20 25-17 45-2 50 6 15-27 18-20 37-25 55H-150" />
        <path d="m45 65 15-10 3-20-12-15 20-10 5-12M45 158l18-8 22 0 7 10 20 12 43 6 22 14 8-14 12 2 2-18 30 16 60 16M85 145l10-22 22-24 76-8 8-7 12-22 12-5 0-22 18-16 22-2 13 6 8-4-12-22M92 160l-10 28-18 22-19 25M290 0l25 15 13 35M345 77l-20-3-15 20-18 6 8 10M165 400l8-12 2-18 12-14 4-20M178 395l20-4 14 15M163 402l-28 8-2 25 25 18 24 8M133 435l-8 36-35 52M163 402l25 8-8 18M45 502l16 4 8-2 18 16 5 7 45-2-2 22-14 6 8 15 4 28M92 530l4 22-14 12-16 14 16 6M45 608l22 2 32 8 10-12 22-9 30-27M134 598l-2 32-18 10-34 32-20 2-15 2M80 674l2 26 36 6-6 30-22 34-24-32-22 20M118 738l-18 20-8 14-26 20-4 26 10 8-26 44M92 772l24 5M45 915l20 4M45 690l3 20M45 630l4 8" />
      </g>
      <g transform="translate(860 115) scale(.3333)" stroke="#444" strokeWidth="3" strokeDasharray="13 6">
        <path stroke="none" fill="#ffffd9" d="M-100 20H200l5 35 17 15 18 20 22 10 48 18 68 0-3 17 7 25-2 18 12 12 18-5 18 11-16 14-27 3-17 9-23 28-17 25-10 25-3 25 0 25 10 40-3 20 3 30 20 22 7 25H-100z" />
        <path fill="#fed998" d="M68 86l6-14 14-10 2-20 24 2-2 22 10 10-12 20-16 4-14-16zM45 240h60l14 54-15 26-16 22-18-24-14-8H45zM196 112l22 14 16 24 24 12-2 18-44 4-10 10-18-6-8-28 20-26zM45 200l20-12 15 22-15 28H45z" />
        <path fill="#eceed0" d="M48 100l20-8 22 4 6 25-8 20 10 18-20 22-24-4-8-20 12-20z" />
        <path fill="#dd6b22" d="M160 68l6 22 12 12-2 20 18 8 4 18-16 18-26 0-24 20 10 24 22-16 18 6 14 22-30 4-34-6-20 6-14-12-14-22-8 4-10-12-8-10 30-24 20-14 22-6z" />
        <path fill="#ff9f38" d="M98 124l8-30 26-14 26-12 2 30-14 22-14 12-18-2-14 4zM103 232l22-20 14-4 10 12 34 6-6 44-16-8-26 18-26 10 12-34zM65 240l6-18 16-12 18 2 4 20-22 10zM132 152l14-10 18 6 0 16-14 8-16-8zM138 180l18-10 18 8-4 14-20 6z" />
        <path fill="#fed998" d="M112 180l14-8 12 12 0 12-14 6-10-10z" />
        <path fill="#93400d" d="M76 196l16-18 20 2-4 16-18 14-8-4z" />
        <path fill="none" d="M200 33l5 22 17 15 18 20 22 10 13 12 35-6 30 14 38-2-3 17 7 25-2 18 12 12 18-5 18 11-16 14-27 3-17 9-23 28-17 25-10 25-3 25 0 25 10 40-3 20 3 30 20 22 7 12M146 35l12 25 15-15 12-10M118 45l35 20M180 110l15-2 20-8 15-3 15 13 10 12 7-10 13-4M182 92l14-32 10-8M262 100l-2 30-6 30M262 130l14-6 24 2 12-12M276 124l-4-26 18 0-4 16M255 165l45-15 10 20-25 35 7 13M322 178l8-28 15-15 13 25-6 35-12 30-10 30-30 13M285 212l10 13 1 40-6 32M375 120l-13 15 16 30 4 20M345 135l20-6M356 222l-22 6M222 225l18-3 44-6M222 225l3 25-13 42M188 190l16 2 2 23-18 5M206 190l24-12 20 2M165 285l20 7 25 3 15 8 60-8 13 15 14 10M250 305l-25 20-27 5-8 8 30 0 50 7 30 3 12-18M198 335l-20 10 2 40 22 27 23-12 45-4 55-6M262 350l-2 25 15 15M285 348l-5 17 10 20M178 388l-28 12-15 10-40 10-25 42-22 13M75 355l40-55 3-15M75 355l10 30 23 23M202 412l-22 8-20 20 45 3 40 2 15 10M240 432l22-12 8-15 30 15 25 20M272 392l18 12-16 8M255 458l30-3 15 5 15-15 8-6M260 460l25 20M232 70l7-8M386 304l12-4 4 8-6 4zM291 72l3 3M65 130l20-12 12 14M58 150l20 6 12 16" />
      </g>
      <g transform="translate(400 475) scale(.3333)" stroke="#444" strokeWidth="3" strokeDasharray="13 6">
        <path stroke="none" fill="#ffffd9" d="M600 410H1412l-17 40-20 40-13 40H693l-3-50-18-25-22-15z" />
        <path fill="#fed998" d="M615 416H722v34l-50 5-22-15zM712 455l23 3-7 20-13-6z" />
        <path fill="#f0942f" d="M725 416h37l-5 22-17 17-20-10z" />
        <path fill="none" d="M672 455l18 25 3 40M1412 416l-17 34-20 40-13 30M690 480l25-6M705 520l14-38M747 458l-3 62M757 440l24 10 5 32 22 18-4 20M824 420l-24 44-4 30 30 14 28-36 0-14-24-6-6-32M866 440l-4 36 14 18-4 26M914 416l-12 30-16 32-4 24-14 18M960 420l-14 50-30 26-30 24M966 440l0 60-10 20M940 455l-38 12M1028 420l-38 80 0 20M998 465l20-14 18 10 24-4 30 10 52 20 38-30 48 6 30-4 12 4M1090 467l40-50M1090 467l4 53M1270 460l6 22-20 38M1275 455l54-6-10-20 14-14M1290 416l-12 34M1310 460l2 40-24 20M1384 430l-24 8-26 60 4 20M1388 440l14-10M680 495l30 8M720 510l65 6M765 445l12 40-8 30" />
      </g>
    </g>
  </MapSvg>
);

/* ---------- status bar and task bar ---------- */

const StatusBar = styled.footer`
  display: flex;
  align-items: center;
  justify-content: flex-end;
  height: 30px;
  padding: 1px 14px 0 0;
`;
const Field = styled.label<{ $gap?: number; $after?: number }>`
  display: flex;
  align-items: center;
  gap: ${p => p.$gap ?? 4}px;
  margin-right: ${p => p.$after ?? 0}px;
`;
const Combo = styled.span<{ $width?: number; $height: number; $arrow: number; $plain?: boolean }>`
  display: flex;
  ${p => (p.$width ? `width: ${p.$width}px;` : "")}
  height: ${p => p.$height}px;
  border: 1px solid #b4b4b4;
  border-radius: 2px;
  background: ${p => (p.$plain ? "#fff" : raised)};
  overflow: hidden;
  position: relative;
  & > select {
    appearance: none;
    flex: 1;
    min-width: 0;
    padding: 0 4px;
    border: 0;
    background: none;
  }
  & > span {
    position: absolute;
    inset: 0 0 0 auto;
    display: grid;
    place-items: center;
    width: ${p => p.$arrow}px;
    border-left: 1px solid #b4b4b4;
    background: ${p => (p.$plain ? raised : "none")};
    pointer-events: none;
  }
`;
const Spin = styled.span`
  display: flex;
  height: 22px;
  border: 1px solid #b4b4b4;
  border-radius: 2px;
  background: #fff;
  overflow: hidden;
  & > input { width: 60px; padding: 0 4px; border: 0; background: none; }
`;
const SpinKeys = styled.span`
  display: flex;
  flex-direction: column;
  width: 16px;
  border-left: 1px solid #b4b4b4;
  & > button { flex: 1; display: grid; place-items: center; background: ${raised}; }
  & > button + button { border-top: 1px solid #b4b4b4; }
`;
const StatusIcon = styled.button<{ $before?: number; $after?: number }>`
  margin: 0 ${p => p.$after ?? 0}px 0 ${p => p.$before ?? 0}px;
`;
const SpinBox = ({ value, label }: { value: string; label: string }) => (
  <Spin>
    <input aria-label={label} defaultValue={value} />
    <SpinKeys>
      <button aria-label="Increase"><Tri $dir="up" /></button>
      <button aria-label="Decrease"><Tri /></button>
    </SpinKeys>
  </Spin>
);

const TaskBar = styled.footer`
  display: flex;
  align-items: center;
  height: 40px;
  background: #000;
  color: #fff;
  font-family: ${system};
`;
const Task = styled.button<{ $state?: "running" | "active" }>`
  display: grid;
  place-items: center;
  width: 48px;
  height: 40px;
  ${p => p.$state === "running" && `
    margin: 0 1px 0 2px;
    background: linear-gradient(#9bc95b, #9bc95b) center bottom / 40px 2px no-repeat;
  `}
  ${p => p.$state === "active" && `
    background: linear-gradient(#9bc95b, #9bc95b) center bottom / 48px 2px no-repeat,
      linear-gradient(90deg, #333 44px, #1c1c1c 44px, #1c1c1c 45px, #2a2a2a 45px);
  `}
`;
const Tray = styled.div`
  display: flex;
  align-items: center;
  margin-left: auto;
`;
const TrayButton = styled.button`width: 24px; display: grid; place-items: center;`;
const Lang = styled.span`margin: 0 16px 0 6px; font-size: 12px;`;
const Clock = styled.time`
  padding: 2px 11px 4px 0;
  margin-right: 4px;
  border-right: 1px solid #555;
  text-align: center;
  line-height: 17px;
`;

/* ---------- dialog ---------- */

const Dialog = styled.section`
  position: absolute;
  top: 35px;
  left: 405px;
  width: 470px;
  border: 1px solid #5b8f22;
  background: #efefef;
  box-shadow: 0 4px 18px rgba(0, 0, 0, 0.4);
`;
const DialogTitle = styled.header`
  display: flex;
  align-items: center;
  height: 30px;
  padding: 0 1px 0 8px;
  background: #fff;
  color: #222;
  font-family: ${system};
  font-size: 12px;
`;
const DialogForm = styled.form`
  display: flex;
  flex-direction: column;
  padding: 21px 32px 23px 29px;
`;
const FormLabel = styled.label`line-height: 18px; padding-bottom: 11px;`;
const Control = styled.div<{ $after?: number }>`
  display: flex;
  flex-direction: column;
  padding: 0 5px ${p => p.$after ?? 24}px 1px;
`;
const TableBox = styled.div`
  display: flex;
  height: 191px;
  padding: 1px;
  border: 1px solid #b6b6b6;
  border-radius: 2px;
`;
const TableSide = styled.div`display: flex; flex-direction: column; flex: 1; min-width: 0;`;
const TableView = styled.div`
  flex: 1;
  overflow: hidden;
  background: #fff;
`;
const Stats = styled.table`
  width: 400px;
  table-layout: fixed;
  border-collapse: separate;
  border-spacing: 0;
`;
const Col = styled.col<{ $w: number }>`width: ${p => p.$w}px;`;
const Th = styled.th<{ $bold?: boolean }>`
  height: ${p => (p.scope === "row" ? 30 : 23)}px;
  padding: ${p => (p.scope === "row" ? 0 : 2)}px 0 0;
  border-right: 1px solid #8c8c8c;
  border-bottom: 1px solid #8c8c8c;
  box-shadow: inset 1px 1px #a5a5a5;
  background: linear-gradient(#fbfbfb, #e6e6e6);
  font-weight: ${p => (p.$bold ? 700 : 400)};
`;
const Td = styled.td<{ $focus?: boolean; $flush?: boolean }>`
  height: 30px;
  padding: 0 0 0 ${p => (p.$flush ? 0 : 3)}px;
  border-right: 1px solid #9a9a9a;
  border-bottom: 1px solid #9a9a9a;
  background: ${p => (p.$focus ? "#efefef" : "#fff")};
`;
const StatSelect = styled.select`
  appearance: none;
  display: block;
  width: 100%;
  height: 29px;
  padding: 0 3px;
  border: 1px solid #a5a5a5;
  border-radius: 2px;
  background: ${raised};
`;
const VScroll = styled.div`display: flex; padding-bottom: 16px;`;
const OutputRow = styled.div`
  display: flex;
  align-items: flex-start;
  gap: 19px;
  padding: 0 5px 25px 1px;
`;
const OutputBox = styled(TextBox)`height: 27px; padding: 0 1px;`;
const PushButton = styled.button<{ $tone?: "strong" | "default"; $width: number }>`
  width: ${p => p.$width}px;
  height: ${p => (p.$tone === "strong" ? 25 : 23)}px;
  border: 1px solid ${p => (p.$tone ? "#7c7c7c" : "#b4b4b4")};
  border-radius: 2px;
  background: ${raised};
  ${p => p.$tone === "default" && `
    border-color: #6d7887;
    background: linear-gradient(#e7ebf1, #d0d6e0);
    box-shadow: inset 0 2px #6aa8ee, inset 0 -2px #6aa8ee;
  `}
`;
const Actions = styled.div`
  display: flex;
  align-items: flex-start;
  gap: 10px;
  padding-left: 1px;
`;
const AddLabel = styled.label`
  display: flex;
  align-items: center;
  gap: 5px;
  margin-right: auto;
  line-height: 18px;
`;

const stats = [
  { id: 23, name: "A90A94_CNT", keep: false, stat: "Count" },
  { id: 24, name: "A95A99_CNT", keep: false, stat: "Count" },
  { id: 25, name: "young", keep: true, stat: "Sum" },
  { id: 26, name: "old", keep: true, stat: "Sum", focus: true },
  { id: 27, name: "aged_index", keep: false, stat: "Count" },
];

const DissolveDialog = () => (
  <Dialog role="dialog" aria-label="Dissolve with stats">
    <DialogTitle>
      <Icon name="quill" size={16} />
      <TitleText>Dissolve with stats</TitleText>
      <WindowButton $strong aria-label="Help"><svg width="10" height="12" viewBox="0 0 10 12"><path d="M2 3c0-3 5.500-3 5.500 0C7.500 5 5 5.500 5 8M5 9.500V11" fill="none" stroke="#111" strokeWidth="1.300" /></svg></WindowButton>
      <WindowButton $strong aria-label="Close"><Icon name="close" /></WindowButton>
    </DialogTitle>
    <DialogForm onSubmit={e => e.preventDefault()}>
      <FormLabel htmlFor="layer">Choose a layer to dissolve :</FormLabel>
      <Control>
        <Combo $height={27} $arrow={16}>
          <select id="layer"><option>twn_population</option></select>
          <span><Tri /></span>
        </Combo>
      </Control>
      <FormLabel htmlFor="field">Choose a dissolve field :</FormLabel>
      <Control>
        <Combo $height={27} $arrow={16}>
          <select id="field"><option>COUNTY_ID</option></select>
          <span><Tri /></span>
        </Combo>
      </Control>
      <FormLabel as="span">Calculate statistics on other fields :</FormLabel>
      <Control $after={20}>
        <TableBox>
          <TableSide>
            <TableView>
              <Stats>
                <colgroup><Col $w={22} /><Col $w={120} /><Col $w={80} /><Col $w={80} /><Col $w={98} /></colgroup>
                <thead>
                  <tr><Th aria-label="Row" /><Th scope="col">name</Th><Th scope="col">type</Th><Th scope="col" $bold>keep</Th><Th scope="col">stat</Th></tr>
                </thead>
                <tbody>
                  {stats.map(s => (
                    <tr key={s.id}>
                      <Th scope="row" $bold={s.focus}>{s.id}</Th>
                      <Td>{s.name}</Td>
                      <Td>Real</Td>
                      <Td $focus={s.focus} $flush><CheckBox aria-label={`Keep ${s.name}`} defaultChecked={s.keep} /></Td>
                      <Td $flush>
                        <StatSelect aria-label={`Statistic for ${s.name}`} defaultValue={s.stat}>
                          <option>Count</option><option>Sum</option>
                        </StatSelect>
                      </Td>
                    </tr>
                  ))}
                </tbody>
              </Stats>
            </TableView>
            <ScrollBar length={249} />
          </TableSide>
          <VScroll><ScrollBar vertical length={26} offset={1} grip={false} /></VScroll>
        </TableBox>
      </Control>
      <FormLabel htmlFor="output">Create output layer :</FormLabel>
      <OutputRow>
        <OutputBox id="output" defaultValue="rto_qgis_2018/qgis_project/dissolve_to_county_wstat.shp" />
        <PushButton type="button" $tone="strong" $width={91}>Browse</PushButton>
      </OutputRow>
      <Actions>
        <AddLabel><CheckBox defaultChecked />Add output layer to the map</AddLabel>
        <PushButton $tone="default" $width={75}>OK</PushButton>
        <PushButton type="button" $width={75}>Cancel</PushButton>
      </Actions>
    </DialogForm>
  </Dialog>
);

const menus = ["Project", "Edit", "View", "Layer", "Settings", "Plugins", "Vector", "Raster", "Database", "Web", "Processing", "Help"];

export default function App() {
  return (
    <>
      <Global />
      <Screen>
        <TitleBar>
          <Icon name="quill" size={16} />
          <TitleText>QGIS 2.18.15 - demo_1</TitleText>
          {["min", "restore", "close"].map(n => <WindowButton key={n} aria-label={n}><Icon name={n} /></WindowButton>)}
        </TitleBar>
        <MenuBar>{menus.map(m => <MenuItem key={m}>{m}</MenuItem>)}</MenuBar>
        <ToolRow>
          <ToolHandle $first><Grip $vertical /></ToolHandle>
          <ToolSet tools={fileTools} />
          <ToolHandle><Grip $vertical /></ToolHandle>
          <ToolSet tools={navTools} />
          <ToolGroup $start={458}>
            <ToolSet tools={attrTools} />
            <ToolHandle><Grip $vertical /></ToolHandle>
            <ToolSet tools={[tool("book", "Help contents")]} />
          </ToolGroup>
        </ToolRow>
        <ToolRow>
          <ToolHandle $first><Grip $vertical /></ToolHandle>
          <ToolSet tools={editTools} />
          <ToolGroup $start={462}><ToolSet tools={[tool("dissolve", "Dissolve with stats")]} /></ToolGroup>
        </ToolRow>
        <Body>
          <ToolBox>
            <SourceGrip><Grip $wide /></SourceGrip>
            {sourceTools.map(t => <SourceRow key={t.label}><ToolSet tools={[t]} /></SourceRow>)}
            <SourceGrip><Grip $wide /></SourceGrip>
          </ToolBox>
          <Dock>
            <DockHead title="Browser Panel" />
            <DockTools>
              {["addLayer", "refresh", "filter", "collapse", "info"].map(n => <DockTool key={n} aria-label={n}><Icon name={n} size={16} /></DockTool>)}
            </DockTools>
            <BrowserTree />
            <Splitter><SplitGrip /></Splitter>
            <DockHead title="Layers Panel" />
            <DockTools>
              {["brush", "group", "eye", "filter", "exprFilter"].map(n => <DockTool key={n} aria-label={n}><Icon name={n} size={16} /></DockTool>)}
              <DropButton aria-label="Filter options"><Tri $size={5} /></DropButton>
              {["expand", "collapse", "removeLayer"].map(n => <DockTool key={n} aria-label={n}><Icon name={n} size={16} /></DockTool>)}
            </DockTools>
            <Frame $height={104}>
              {layers.map((l, i) => (
                <TreeRow key={i} $bold $selected={l.on}>
                  <Guide $v={l.on ? "top" : "full"} $h>{l.on && <Expander />}</Guide>
                  <LayerCheck><CheckBox aria-label={l.name} defaultChecked={l.on} /></LayerCheck>
                  <Swatch $tone={l.tone}>{l.on && <Icon name="polyBlue" size={16} />}</Swatch>
                  <TreeText $active={l.on}>{l.name}</TreeText>
                </TreeRow>
              ))}
            </Frame>
          </Dock>
          <Splitter $vertical><SplitGrip $vertical /></Splitter>
          <MapFrame aria-label="Map"><TaiwanMap /></MapFrame>
        </Body>
        <StatusBar>
          <Field $gap={2} $after={5}>Coordinate <TextBox $width={121} $center defaultValue="32256,2763666" /></Field>
          <StatusIcon aria-label="Toggle extents" $after={13}><Icon name="bug" size={16} /></StatusIcon>
          <Field $gap={2} $after={5}>Scale
            <Combo $width={90} $height={20} $arrow={16} $plain>
              <select><option>1:1,891,298</option></select>
              <span><Tri /></span>
            </Combo>
          </Field>
          <StatusIcon aria-label="Lock scale" $after={13}><Icon name="lock" size={16} /></StatusIcon>
          <Field $gap={2} $after={7}>Magnifier <SpinBox label="Magnifier" value="100%" /></Field>
          <Field $gap={9} $after={5}>Rotation <SpinBox label="Rotation" value="0.0" /></Field>
          <Field><CheckBox defaultChecked /> Render</Field>
          <StatusIcon aria-label="Projection" $before={18} $after={3}><Icon name="crs" size={16} /></StatusIcon>
          EPSG:3826 (OTF)
          <StatusIcon aria-label="Messages" $before={23}><Icon name="chat" size={17} /></StatusIcon>
        </StatusBar>
        <TaskBar>
          <Task aria-label="Start"><Icon name="win" /></Task>
          <Task aria-label="Search"><Icon name="search" /></Task>
          <Task aria-label="Task view"><Icon name="tasks" /></Task>
          <Task aria-label="File Explorer" $state="running"><Icon name="explorer" /></Task>
          <Task aria-label="QGIS" $state="active"><Icon name="quill" size={22} /></Task>
          <Tray>
            {["up", "battery", "network", "sound", "action"].map(n => <TrayButton key={n} aria-label={n}><Icon name={n} size={22} /></TrayButton>)}
            <Lang>ENG</Lang>
            <Clock>17:46<br />10/01/2018</Clock>
          </Tray>
        </TaskBar>
        <DissolveDialog />
      </Screen>
    </>
  );
}
